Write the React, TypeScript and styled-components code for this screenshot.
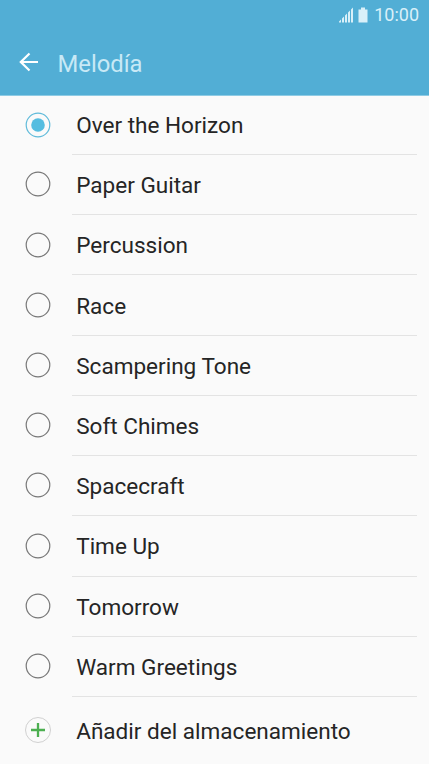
import React from "react";
import styled, { createGlobalStyle } from "styled-components";

const Global = createGlobalStyle`
  *{box-sizing:border-box}
  body{margin:0;background:#fafafa;font-family:Roboto,"Liberation Sans",sans-serif;color:#252525;overflow:hidden}
`;
const Screen = styled.main`width:429px;height:764px;overflow:hidden;background:#fafafa;`;
const Header = styled.header`height:96px;background:#52aed5;color:#d9f0f9;border-bottom:1px solid #8ecbe4;`;
const StatusBar = styled.div`height:30px;display:flex;justify-content:flex-end;align-items:center;padding:0 10px 1px 0;font-size:18px;`;
const StatusIcons = styled.svg`width:32px;height:16px;margin-right:4px;`;
const Toolbar = styled.div`height:66px;display:flex;align-items:center;padding-left:19px;`;
const BackIcon = styled.svg`width:20px;height:20px;margin:0 18.5px 2px 0;`;
const Title = styled.h1`margin:0;padding-top:1px;font-size:23.8px;font-weight:400;line-height:28px;color:#c8e9f6;`;
const List = styled.ul`list-style:none;margin:0;padding:0;`;
const Row = styled.li<{ $h: number }>`height:${p => p.$h}px;display:flex;align-items:stretch;padding-left:25px;`;
const Control = styled.svg`width:26px;height:26px;flex:none;align-self:center;margin:0 21px 1.6px 0;`;
const Label = styled.span<{ $line?: boolean; $top?: number }>`width:345px;display:flex;align-items:center;padding:${p => p.$top ?? 2}px 0 0 4.2px;font-size:22.55px;border-bottom:${p => p.$line ? "1px solid #e3e3e3" : "0"};`;

const tones = ["Over the Horizon","Paper Guitar","Percussion","Race","Scampering Tone","Soft Chimes","Spacecraft","Time Up","Tomorrow","Warm Greetings"];

export default function App() {
  return <Screen><Global />
    <Header>
      <StatusBar>
        <StatusIcons viewBox="0 0 32 16" fill="currentColor"><path d="M1 15.5v-1l2-2v3zM4 15.5v-4l2-2v6zM7 15.5v-7l2-2v9zM10 15.5v-10l2-2v12zM13 15.5v-13l2-2v15zM20.5 2.5h2.5v-2h4v2h2.5v13h-9z"/></StatusIcons>
        <span>10:00</span>
      </StatusBar>
      <Toolbar>
        <BackIcon viewBox="0 0 20 20" fill="none" stroke="#fff" strokeWidth="2.2"><path d="M19 10H2M10.5 1.5L1.8 10l8.7 8.5"/></BackIcon>
        <Title>Melodía</Title>
      </Toolbar>
    </Header>
    <List>
      {tones.map((t, i) => <Row key={t} $h={i ? 60.22 : 59}>
        <Control viewBox="0 0 26 26" fill="none"><circle cx="13" cy="13" r="11.8" stroke={i ? "#777" : "#60bbda"} strokeWidth="1.2"/>{i === 0 && <circle cx="13" cy="13" r="6.8" fill="#55bde0"/>}</Control>
        <Label $line $top={i ? 2 : 1}>{t}</Label>
      </Row>)}
      <Row $h={67}>
        <Control viewBox="0 0 26 26" fill="none"><circle cx="13" cy="13" r="12.5" stroke="#d0d0d0"/><path d="M13 6v14M6 13h14" stroke="#4caf50" strokeWidth="2.3"/></Control>
        <Label>Añadir del almacenamiento</Label>
      </Row>
    </List>
  </Screen>;
}
